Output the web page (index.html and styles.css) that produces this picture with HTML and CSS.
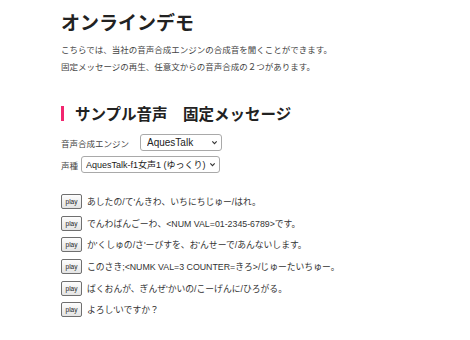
FILE: index.html
```html
<!doctype html>
<html>
<head>
<meta charset="utf-8">
<title>オンラインデモ</title>
<link rel="stylesheet" href="styles.css">
</head>
<body>
<div class="page">
	<h1>オンラインデモ</h1>
	<p class="lead">こちらでは、当社の音声合成エンジンの合成音を聞くことができます。<br>固定メッセージの再生、任意文からの音声合成の２つがあります。</p>

	<h2>サンプル音声　固定メッセージ</h2>

	<div class="settings">
		<div class="row">
			<label class="engine-label">音声合成エンジン</label>
			<span class="select engine">
				<select><option>AquesTalk</option></select>
				<svg viewBox="0 0 8 8" width="7" height="7"><path d="M1.5 2.8 4 5.3 6.5 2.8" fill="none" stroke="#333" stroke-width="1.3"/></svg>
			</span>
		</div>
		<div class="row">
			<label>声種</label>
			<span class="select voice">
				<select><option>AquesTalk-f1女声1 (ゆっくり)</option></select>
				<svg viewBox="0 0 8 8" width="7" height="7"><path d="M1.5 2.8 4 5.3 6.5 2.8" fill="none" stroke="#333" stroke-width="1.3"/></svg>
			</span>
		</div>
	</div>

	<ul class="messages">
		<li><button>play</button>あしたの/て'んきわ、いちにちじゅー/はれ。</li>
		<li><button>play</button>でんわばんごーわ、&lt;NUM VAL=01-2345-6789&gt;です。</li>
		<li><button>play</button>か'くしゅの/さ'ーびすを、お'んせーで/あんないします。</li>
		<li><button>play</button>このさき;&lt;NUMK VAL=3 COUNTER=きろ&gt;/じゅーたいちゅー。</li>
		<li><button>play</button>ばくおんが、ぎんぜ'かいの/こーげんに/ひろがる。</li>
		<li><button>play</button>よろし'いですか？</li>
	</ul>
</div>
</body>
</html>
```

FILE: styles.css
```css
* {
	margin: 0;
	padding: 0;
	box-sizing: border-box;
}

body {
	background: #fff;
	color: #333;
	font-family: "Noto Sans CJK JP", "Liberation Sans", sans-serif;
}

.page {
	padding: 9px 0 0 61px;
}

h1 {
	font-size: 19px;
	font-weight: bold;
	line-height: 26px;
	color: #222;
}

.lead {
	margin-top: 6px;
	font-size: 8.5px;
	line-height: 17px;
	color: #444;
}

h2 {
	margin-top: 31px;
	border-left: 3px solid #f2266f;
	padding-left: 11px;
	font-size: 15.5px;
	font-weight: bold;
	line-height: 15px;
	color: #222;
}

.settings {
	margin-top: 13px;
}

.row {
	display: flex;
	align-items: center;
	height: 17px;
	margin-bottom: 5px;
	font-size: 8.5px;
	color: #444;
}

.row label {
	margin-right: 3px;
}

.row .engine-label {
	margin-right: 11px;
}

.select {
	position: relative;
	display: block;
	height: 17px;
}

.select select {
	appearance: none;
	-webkit-appearance: none;
	width: 100%;
	height: 17px;
	font-family: "Liberation Sans", "Noto Sans CJK JP", sans-serif;
	font-size: 10px;
	color: #222;
	background: #fff;
	border: 1px solid #a9a9a9;
	border-radius: 3px;
	padding: 0 9px 0 4px;
}

.select svg {
	position: absolute;
	right: 4px;
	top: 5px;
}

.engine {
	width: 82px;
}

.engine select {
	padding-left: 6px;
}

.voice {
	width: 139px;
}

.voice select {
	font-size: 9px;
}

.messages {
	list-style: none;
	margin-top: 18px;
}

.messages li {
	display: flex;
	align-items: center;
	height: 21.6px;
	font-family: "Liberation Sans", "Noto Sans CJK JP", sans-serif;
	font-size: 8.8px;
	color: #333;
}

.messages button {
	width: 21px;
	height: 15px;
	margin-right: 5px;
	font-family: "Liberation Sans", sans-serif;
	font-size: 6.5px;
	color: #222;
	background: linear-gradient(#fdfdfd, #e4e4e4);
	border: 1px solid #6f6f6f;
	border-radius: 2px;
}
```
